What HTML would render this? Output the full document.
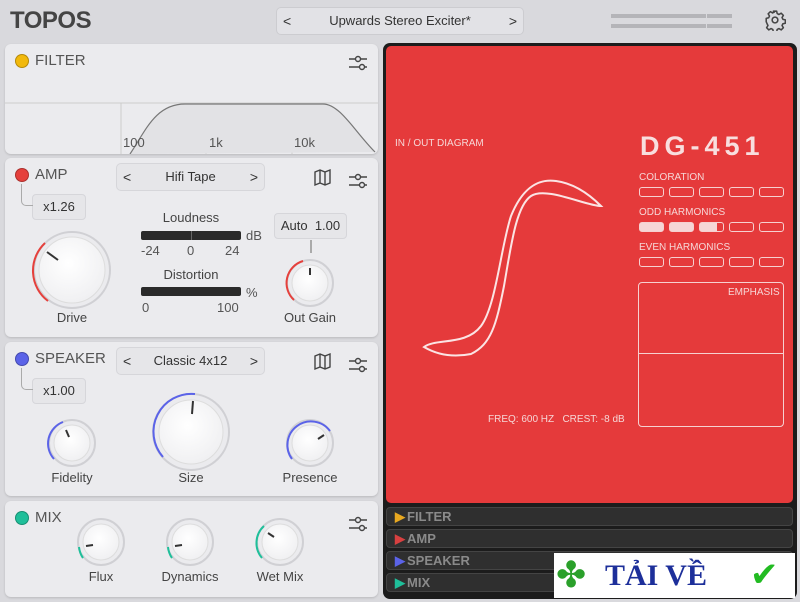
<!DOCTYPE html>
<html><head><meta charset="utf-8"><style>
*{margin:0;padding:0;box-sizing:border-box}
body{width:800px;height:602px;background:#d9d9dd;font-family:"Liberation Sans",sans-serif;position:relative;overflow:hidden;color:#333}
.a{position:absolute}
.panel{position:absolute;left:5px;width:373px;background:#ebebee;border-radius:6px;box-shadow:0 1px 2px rgba(0,0,0,.15)}
.hdr{position:absolute;font-size:15px;color:#555;left:30px}
.dot{position:absolute;left:10px;width:14px;height:14px;border-radius:50%;border:1.5px solid rgba(0,0,0,.25)}
.sel{position:absolute;left:111px;width:149px;height:28px;border:1px solid #d6d6da;border-radius:5px;background:#e6e6e9;font-size:13px;text-align:center;line-height:26px;color:#333}
.sel .l{position:absolute;left:6px;top:0;font-size:14px}.sel .r{position:absolute;right:6px;top:0;font-size:14px}
.box{position:absolute;border:1px solid #d6d6da;border-radius:4px;background:#e6e6e9;font-size:13px;text-align:center;color:#333}
.lbl{position:absolute;font-size:13px;color:#444;text-align:center;width:100px}
.sm{position:absolute;font-size:13px;color:#555}
.tab{position:absolute;left:386px;width:407px;height:19px;background:#2f2f2f;border:1px solid #444;border-radius:4px;font-size:13px;font-weight:bold;color:#8a8a8a;line-height:18px;padding-left:8px}
.tab span{margin-right:2px}
.rt{position:absolute;color:#f6d6d6;font-size:10px}
.cells{position:absolute;left:639px;display:flex;gap:5px}
.cells div{width:25px;height:10px;border:1.3px solid #f6d0d0;border-radius:3px}
</style></head><body>
<div class="a" style="left:10px;top:7px;font-size:24px;font-weight:bold;color:#444;letter-spacing:-0.5px">TOPOS</div>
<div class="a" style="left:276px;top:7px;width:248px;height:28px;border:1px solid #ccccd0;border-radius:5px;background:#e2e2e6;font-size:13px;line-height:26px;text-align:center;color:#333">Upwards Stereo Exciter*<span class="a" style="left:6px;top:0;font-size:14px">&lt;</span><span class="a" style="right:6px;top:0;font-size:14px">&gt;</span></div>
<div class="a" style="left:611px;top:14px;width:121px;height:4px;background:#b4b4b8"></div>
<div class="a" style="left:611px;top:24px;width:121px;height:4px;background:#b4b4b8"></div>
<div class="a" style="left:706px;top:12px;width:1px;height:18px;background:#d9d9dd"></div>
<svg class="a" style="left:764px;top:9px" width="22" height="22" viewBox="0 0 20 20"><path d="M8.5 2h3l.5 2.2 1.6.8 2-1.2 2 2-1.2 2 .8 1.6 2.2.5v3l-2.2.5-.8 1.6 1.2 2-2 2-2-1.2-1.6.8-.5 2.2h-3l-.5-2.2-1.6-.8-2 1.2-2-2 1.2-2-.8-1.6L2 11.5v-3l2.2-.5.8-1.6-1.2-2 2-2 2 1.2 1.6-.8z" fill="none" stroke="#444" stroke-width="1.4" stroke-linejoin="round"/><circle cx="10" cy="10" r="2.6" fill="none" stroke="#444" stroke-width="1.4"/></svg>

<!-- FILTER -->
<div class="panel" style="top:44px;height:110px;overflow:hidden">
<div class="dot" style="top:10px;background:#f2b90c"></div><div class="hdr" style="top:8px">FILTER</div>
<svg class="a" style="left:0;top:58px" width="373" height="52"><line x1="0" y1="1" x2="373" y2="1" stroke="#ccc"/><line x1="116" y1="1" x2="116" y2="52" stroke="#ccc"/><line x1="201" y1="1" x2="201" y2="52" stroke="#ccc"/><line x1="287" y1="1" x2="287" y2="52" stroke="#ccc"/><path d="M125 52 C140 30 150 2 180 2 L318 2 C335 2 350 30 370 50" fill="#e2e2e5" stroke="#777" stroke-width="1.2"/></svg>
<div class="sm" style="left:118px;top:91px">100</div><div class="sm" style="left:204px;top:91px">1k</div><div class="sm" style="left:289px;top:91px">10k</div>
</div>

<svg class="a" style="left:0;top:0" width="380" height="600">
<defs><radialGradient id="g" cx="45%" cy="40%" r="60%"><stop offset="0" stop-color="#fff"/><stop offset="1" stop-color="#f0f0f2"/></radialGradient></defs>
</svg>

<!-- AMP -->
<div class="panel" style="top:158px;height:179px">
<div class="dot" style="top:10px;background:#e5403c"></div><div class="hdr" style="top:8px">AMP</div>
<div class="sel" style="top:5px">Hifi Tape<span class="l">&lt;</span><span class="r">&gt;</span></div>
<div class="box" style="left:27px;top:36px;width:54px;height:26px;line-height:24px">x1.26</div>
<div class="a" style="left:16px;top:26px;width:12px;height:22px;border-left:1.5px solid #aaa;border-bottom:1.5px solid #aaa;border-bottom-left-radius:5px"></div>
<div class="lbl" style="left:136px;top:52px">Loudness</div>
<div class="a" style="left:136px;top:73px;width:100px;height:9px;background:#2a2a2a;border-radius:2px"></div>
<div class="a" style="left:186px;top:73px;width:1px;height:9px;background:#666"></div>
<div class="sm" style="left:241px;top:70px">dB</div>
<div class="sm" style="left:136px;top:85px">-24</div><div class="sm" style="left:182px;top:85px">0</div><div class="sm" style="left:220px;top:85px">24</div>
<div class="lbl" style="left:136px;top:109px">Distortion</div>
<div class="a" style="left:136px;top:129px;width:100px;height:9px;background:#2a2a2a;border-radius:2px"></div>
<div class="sm" style="left:241px;top:127px">%</div>
<div class="sm" style="left:137px;top:142px">0</div><div class="sm" style="left:212px;top:142px">100</div>
<div class="box" style="left:269px;top:55px;width:73px;height:26px;line-height:24px">Auto&nbsp; 1.00</div>
<div class="a" style="left:305px;top:82px;width:1.5px;height:13px;background:#aaa"></div>
<div class="lbl" style="left:17px;top:152px">Drive</div>
<div class="lbl" style="left:255px;top:152px">Out Gain</div>
</div>

<!-- SPEAKER -->
<div class="panel" style="top:342px;height:154px">
<div class="dot" style="top:10px;background:#5b63e8"></div><div class="hdr" style="top:8px">SPEAKER</div>
<div class="sel" style="top:5px">Classic 4x12<span class="l">&lt;</span><span class="r">&gt;</span></div>
<div class="box" style="left:27px;top:36px;width:54px;height:26px;line-height:24px">x1.00</div>
<div class="a" style="left:16px;top:26px;width:12px;height:22px;border-left:1.5px solid #aaa;border-bottom:1.5px solid #aaa;border-bottom-left-radius:5px"></div>
<div class="lbl" style="left:17px;top:128px">Fidelity</div>
<div class="lbl" style="left:136px;top:128px">Size</div>
<div class="lbl" style="left:255px;top:128px">Presence</div>
</div>

<!-- MIX -->
<div class="panel" style="top:501px;height:96px">
<div class="dot" style="top:10px;background:#1fbf9a"></div><div class="hdr" style="top:8px">MIX</div>
<div class="lbl" style="left:46px;top:68px">Flux</div>
<div class="lbl" style="left:135px;top:68px">Dynamics</div>
<div class="lbl" style="left:225px;top:68px">Wet Mix</div>
</div>

<!-- icons -->
<svg class="a" style="left:0;top:0" width="380" height="600" fill="none" stroke="#444" stroke-width="1.4">
<g id="sl"><path d="M349 59h6M361 59h6M349 67h10M365 67h2"/><circle cx="358" cy="59" r="2.5"/><circle cx="362" cy="67" r="2.5"/></g>
<use href="#sl" y="118"/><use href="#sl" y="302"/><use href="#sl" y="461"/>
<path d="M315 172l5-2 5 2 5-2v13l-5 2-5-2-5 2z M320 170v13 M325 172v13"/>
<path d="M315 356l5-2 5 2 5-2v13l-5 2-5-2-5 2z M320 354v13 M325 356v13"/>
</svg>

<!-- knobs -->
<svg class="a" style="left:0;top:0" width="380" height="600">
<g>
<circle cx="72" cy="270" r="38" fill="none" stroke="#d0d0d4" stroke-width="2"/>
<path d="M48 301 A38 38 0 0 1 45 243" fill="none" stroke="#e5403c" stroke-width="2"/>
<circle cx="72" cy="270" r="33" fill="url(#g)" stroke="#ddd"/>
<line x1="47" y1="252" x2="58" y2="260" stroke="#333" stroke-width="2"/>

<circle cx="310" cy="283" r="23" fill="none" stroke="#d0d0d4" stroke-width="2"/>
<path d="M294 300 A23 23 0 0 1 303 261" fill="none" stroke="#e5403c" stroke-width="2"/>
<circle cx="310" cy="283" r="18" fill="url(#g)" stroke="#ddd"/>
<line x1="310" y1="268" x2="310" y2="275" stroke="#333" stroke-width="2"/>

<circle cx="72" cy="443" r="23" fill="none" stroke="#d0d0d4" stroke-width="2"/>
<path d="M54 459 A23 23 0 0 1 63 422" fill="none" stroke="#5b63e8" stroke-width="2"/>
<circle cx="72" cy="443" r="18" fill="url(#g)" stroke="#ddd"/>
<line x1="66" y1="430" x2="69" y2="437" stroke="#333" stroke-width="2"/>

<circle cx="191" cy="432" r="38" fill="none" stroke="#d0d0d4" stroke-width="2"/>
<path d="M163 457 A38 38 0 0 1 195 394" fill="none" stroke="#5b63e8" stroke-width="2"/>
<circle cx="191" cy="432" r="32" fill="url(#g)" stroke="#ddd"/>
<line x1="193" y1="401" x2="192" y2="414" stroke="#333" stroke-width="2"/>

<circle cx="310" cy="443" r="23" fill="none" stroke="#d0d0d4" stroke-width="2"/>
<path d="M292 459 A23 23 0 0 1 330 431" fill="none" stroke="#5b63e8" stroke-width="2"/>
<circle cx="310" cy="443" r="18" fill="url(#g)" stroke="#ddd"/>
<line x1="324" y1="435" x2="318" y2="439" stroke="#333" stroke-width="2"/>

<circle cx="101" cy="542" r="23" fill="none" stroke="#d0d0d4" stroke-width="2"/>
<path d="M83 558 A23 23 0 0 1 79 547" fill="none" stroke="#1fbf9a" stroke-width="2"/>
<circle cx="101" cy="542" r="18" fill="url(#g)" stroke="#ddd"/>
<line x1="86" y1="546" x2="93" y2="545" stroke="#333" stroke-width="2"/>

<circle cx="190" cy="542" r="23" fill="none" stroke="#d0d0d4" stroke-width="2"/>
<path d="M172 558 A23 23 0 0 1 168 547" fill="none" stroke="#1fbf9a" stroke-width="2"/>
<circle cx="190" cy="542" r="18" fill="url(#g)" stroke="#ddd"/>
<line x1="175" y1="546" x2="182" y2="545" stroke="#333" stroke-width="2"/>

<circle cx="280" cy="542" r="23" fill="none" stroke="#d0d0d4" stroke-width="2"/>
<path d="M262 558 A23 23 0 0 1 264 526" fill="none" stroke="#1fbf9a" stroke-width="2"/>
<circle cx="280" cy="542" r="18" fill="url(#g)" stroke="#ddd"/>
<line x1="268" y1="533" x2="274" y2="537" stroke="#333" stroke-width="2"/>
</g>
</svg>

<!-- RIGHT -->
<div class="a" style="left:383px;top:43px;width:414px;height:556px;background:#1c1c1c;border-radius:7px"></div>
<div class="a" style="left:386px;top:46px;width:407px;height:457px;background:#e53a3b;border-radius:5px"></div>
<div class="rt" style="left:395px;top:138px">IN / OUT DIAGRAM</div>
<div class="a" style="left:640px;top:131px;font-size:27px;font-weight:bold;color:#f8dede;letter-spacing:5px">DG-451</div>
<div class="rt" style="left:639px;top:172px">COLORATION</div>
<div class="cells" style="top:187px"><div></div><div></div><div></div><div></div><div></div></div>
<div class="rt" style="left:639px;top:207px">ODD HARMONICS</div>
<div class="cells" style="top:222px"><div style="background:#f6d6d6"></div><div style="background:#f6d6d6"></div><div style="background:linear-gradient(90deg,#f6d6d6 75%,transparent 75%)"></div><div></div><div></div></div>
<div class="rt" style="left:639px;top:242px">EVEN HARMONICS</div>
<div class="cells" style="top:257px"><div></div><div></div><div></div><div></div><div></div></div>
<div class="a" style="left:638px;top:282px;width:146px;height:145px;border:1.3px solid #f6d0d0;border-radius:4px"></div>
<div class="a" style="left:639px;top:353px;width:144px;height:1.3px;background:#f6d0d0"></div>
<div class="rt" style="left:728px;top:287px">EMPHASIS</div>
<div class="rt" style="left:488px;top:414px">FREQ: 600 HZ&nbsp;&nbsp; CREST: -8 dB</div>
<svg class="a" style="left:386px;top:46px" width="260" height="400" fill="none" stroke="#fbe4e4" stroke-width="2">
<path d="M38 301 C50 292 80 300 95 280 C110 260 115 200 125 170 C135 145 150 132 170 135 C185 137 200 145 215 160 C200 160 160 140 145 150 C130 160 125 200 118 240 C110 280 105 298 85 308 C65 312 50 308 38 301 Z"/>
</svg>
<div class="tab" style="top:507px"><span style="color:#e8a820">▶</span>FILTER</div>
<div class="tab" style="top:529px"><span style="color:#d84040">▶</span>AMP</div>
<div class="tab" style="top:551px"><span style="color:#5b63e8">▶</span>SPEAKER</div>
<div class="tab" style="top:573px"><span style="color:#1fbf9a">▶</span>MIX</div>

<div class="a" style="left:554px;top:553px;width:241px;height:45px;background:#fff"></div>
<div class="a" style="left:556px;top:553px;font-size:36px;color:#2aa02a;line-height:44px">✤</div>
<div class="a" style="left:605px;top:557px;font-family:'Liberation Serif',serif;font-size:30px;font-weight:bold;color:#1d2f9a;line-height:38px">TẢI VỀ</div>
<div class="a" style="left:750px;top:553px;font-size:34px;color:#22bb22;line-height:44px">✔</div>
</body></html>
